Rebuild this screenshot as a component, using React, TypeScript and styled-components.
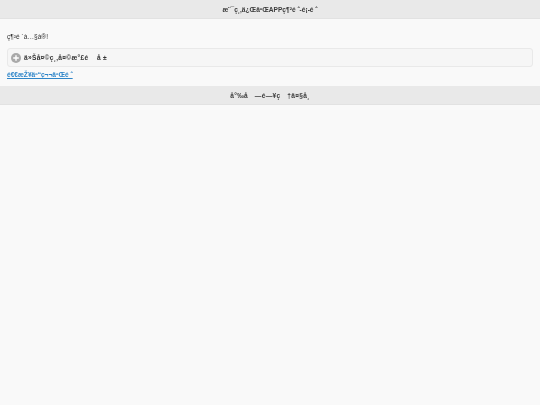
import React from "react";
import styled, { createGlobalStyle } from "styled-components";

const Global = createGlobalStyle`
  html, body { margin: 0; padding: 0; background: #f9f9f9; }
  body { font-family: "Liberation Sans", Arial, sans-serif; color: #333; }
`;

const Page = styled.div`
  width: 540px;
  height: 405px;
  overflow: hidden;
  display: flex;
  flex-direction: column;
  background: #f9f9f9;
  filter: blur(0.3px);
`;

const Bar = styled.div<{ $spacing?: number }>`
  box-sizing: border-box;
  height: 19px;
  flex: none;
  display: flex;
  align-items: center;
  justify-content: center;
  background: #e9e9e9;
  border-bottom: 1px solid #e2e2e2;
  font-size: 6.6px;
  font-weight: 700;
  letter-spacing: ${(p) => p.$spacing ?? 0}px;
  color: #3a3a3a;
  white-space: pre;
`;

const Content = styled.div`
  display: flex;
  flex-direction: column;
  padding: 13.5px 7px 7px;
`;

const Intro = styled.p`
  margin: 0 0 7.5px;
  font-size: 6.6px;
  line-height: 8px;
  color: #333;
`;

const Row = styled.div`
  box-sizing: border-box;
  height: 19px;
  display: flex;
  align-items: center;
  gap: 3px;
  padding: 0 3px;
  background: #f6f6f6;
  border: 1px solid #e9e9e9;
  border-radius: 3px;
  font-size: 6.6px;
  font-weight: 700;
  letter-spacing: 0.3px;
  color: #333;
  white-space: pre;
`;

const AddIcon = styled.svg`
  width: 10px;
  height: 10px;
  flex: none;
`;

const Link = styled.a`
  margin-top: 4px;
  font-size: 6.6px;
  line-height: 8px;
  font-weight: 700;
  color: #2f86c9;
  text-decoration: underline;
`;

export default function App() {
  return (
    <Page>
      <Global />
      <Bar>æ¨¯ç¸‚ä¿ŒäºŒAPPç¶²é ˆ-é¡-é ˆ</Bar>
      <Content>
        <Intro>ç¶²é ´à…§à®!</Intro>
        <Row>
          <AddIcon viewBox="0 0 10 10">
            <circle cx="5" cy="5" r="5" fill="#a9a9a9" />
            <path d="M5 2.2v5.6M2.2 5h5.6" stroke="#fff" strokeWidth="1.4" />
          </AddIcon>
          <span>ä»Šå¤©ç¸‚å¤©æ°£é    å ±</span>
        </Row>
        <Link href="#">é€€æŽ¥äº“ç¬¬äºŒé ˆ</Link>
      </Content>
      <Bar $spacing={0.35}>å°‰å   —é—¥ç   †ä¤§å¸</Bar>
    </Page>
  );
}
